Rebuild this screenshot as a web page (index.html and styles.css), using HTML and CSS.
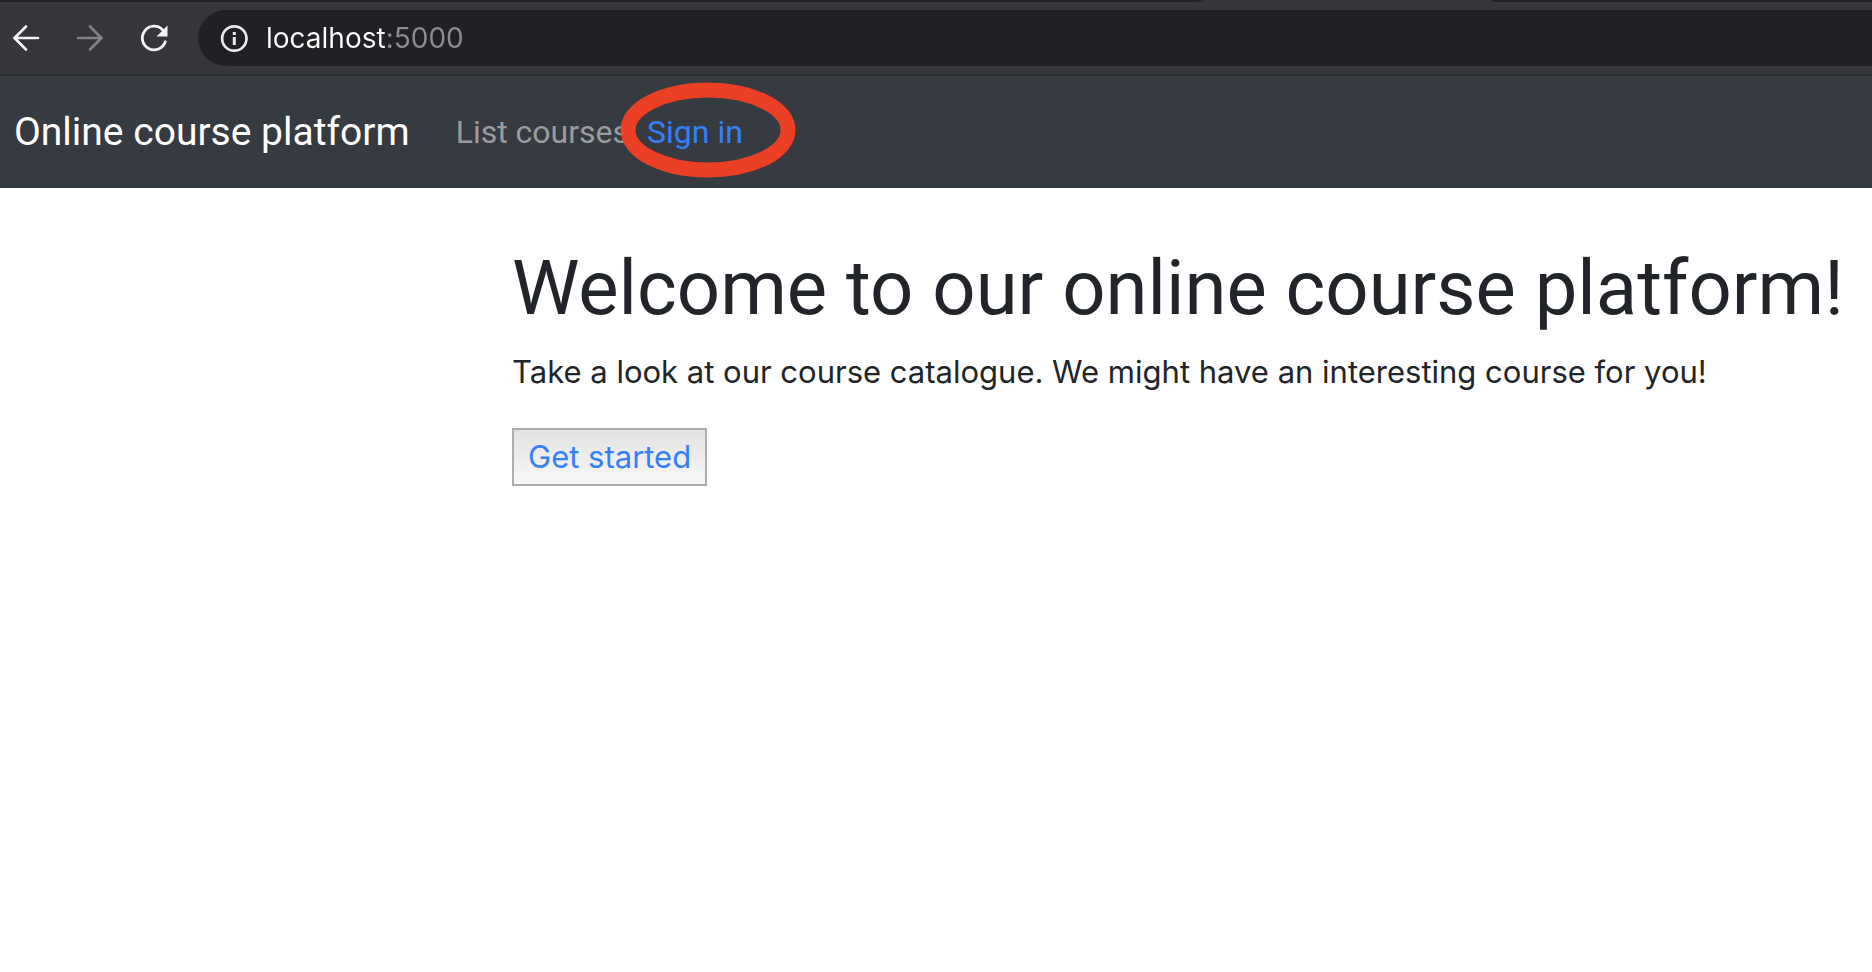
FILE: index.html
```html
<!DOCTYPE html>
<html lang="en">
<head>
<meta charset="utf-8">
<title>Online course platform</title>
<link rel="stylesheet" href="styles.css">
</head>
<body>
<header class="browser">
  <div class="tab-strip">
    <svg class="active-tab" viewBox="0 0 298 2" aria-hidden="true"><path d="M0 2Q3 1.6 5 0H293Q295 1.6 298 2Z" fill="#35363a"/></svg>
  </div>
  <div class="toolbar">
    <button class="tool" type="button" aria-label="Back">
      <svg viewBox="0 0 32 32" class="icon"><path d="M28 16H5M16 4.500L4.500 16L16 27.500" fill="none" stroke="#f1f3f4" stroke-width="2.700" stroke-linecap="round"/></svg>
    </button>
    <button class="tool" type="button" aria-label="Forward" disabled>
      <svg viewBox="0 0 32 32" class="icon"><path d="M4 16H27M16 4.500L27.500 16L16 27.500" fill="none" stroke="#808184" stroke-width="2.700" stroke-linecap="round"/></svg>
    </button>
    <button class="tool" type="button" aria-label="Reload">
      <svg viewBox="0 0 32 32" class="icon"><path d="M24.800 8A11.800 11.800 0 1 0 27.300 19.800" fill="none" stroke="#f1f3f4" stroke-width="2.800" stroke-linecap="round"/><path d="M29.500 3.500V14.500H18.500Z" fill="#f1f3f4"/></svg>
    </button>
    <div class="omnibox">
      <svg viewBox="0 0 32 32" class="icon" aria-hidden="true"><circle cx="16.300" cy="16.500" r="12.200" fill="none" stroke="#e8eaed" stroke-width="2.700"/><path d="M14.800 10h3v3h-3zM14.800 15h3v8h-3z" fill="#e8eaed"/></svg>
      <input class="url" type="text" aria-label="Address" value="localhost:5000">
    </div>
  </div>
</header>
<nav class="navbar">
  <a class="brand" href="#">Online course platform</a>
  <a class="nav-link" href="#">List courses</a>
  <span class="highlighted">
    <a class="sign-in" href="#">Sign in</a>
    <svg class="ring" viewBox="0 0 176 96" aria-hidden="true"><ellipse cx="88" cy="48" rx="80" ry="40" fill="none" stroke="#eb4025" stroke-width="15"/></svg>
  </span>
</nav>
<main class="content">
  <h1 class="title">Welcome to our online course platform!</h1>
  <p class="lead">Take a look at our course catalogue. We might have an interesting course for you!</p>
  <button class="start" type="button">Get started</button>
</main>
</body>
</html>
```
FILE: styles.css
```css
* { box-sizing: border-box; }
body {
  margin: 0;
  background: #fff;
  color: #212529;
  font-family: Inter, "Liberation Sans", sans-serif;
  font-size: 31px;
  line-height: 48px;
}
.tab-strip {
  display: flex;
  height: 2px;
  padding-left: 64%;
  background: #202124;
}
.active-tab { width: 298px; height: 2px; }
.toolbar {
  display: flex;
  align-items: center;
  gap: 32px;
  height: 74px;
  padding-left: 10px;
  background: #35363a;
  border-bottom: 2px solid #292a2c;
}
.tool {
  display: flex;
  padding: 0;
  border: 0;
  background: none;
}
.icon { display: block; flex: none; width: 32px; height: 32px; }
.omnibox {
  display: flex;
  flex: 1;
  align-items: center;
  gap: 16px;
  height: 56px;
  margin-left: -4px;
  padding-left: 20px;
  border-radius: 28px 0 0 28px;
  background: #202124;
}
.url {
  flex: 1;
  min-width: 0;
  height: 40px;
  padding: 0;
  border: 0;
  outline: 0;
  font: 28px/40px Inter, "Liberation Sans", sans-serif;
  color: #fff;
  background: linear-gradient(90deg, #fff 120px, #8b8c8f 120px);
  background-clip: text;
  -webkit-background-clip: text;
  -webkit-text-fill-color: transparent;
}
.navbar {
  display: flex;
  align-items: center;
  height: 112px;
  padding-left: 14px;
  background: #363a41;
  font-family: Roboto, "Liberation Sans", sans-serif;
  font-size: 32px;
}
.navbar a { text-decoration: none; white-space: nowrap; }
.brand { margin-right: 46px; color: #fff; font-size: 39px; }
.nav-link { margin-right: 18px; color: #9a9c9f; }
.highlighted { position: relative; }
.navbar .sign-in { color: #3480f7; }
.ring {
  position: absolute;
  top: -26px;
  left: -27px;
  width: 176px;
  height: 96px;
  pointer-events: none;
}
.content { padding: 52px 0 48px 512px; }
.title {
  margin: 0 0 12px;
  font-family: Roboto, "Liberation Sans", sans-serif;
  font-size: 76px;
  font-weight: 400;
  line-height: 96px;
}
.lead { margin: 0 0 32px; }
.start {
  height: 58px;
  padding: 0 14px;
  border: 2px solid #adadad;
  border-radius: 0;
  background: linear-gradient(#e2e2e2, #f8f8f8);
  color: #3480f7;
  font: inherit;
}
```
